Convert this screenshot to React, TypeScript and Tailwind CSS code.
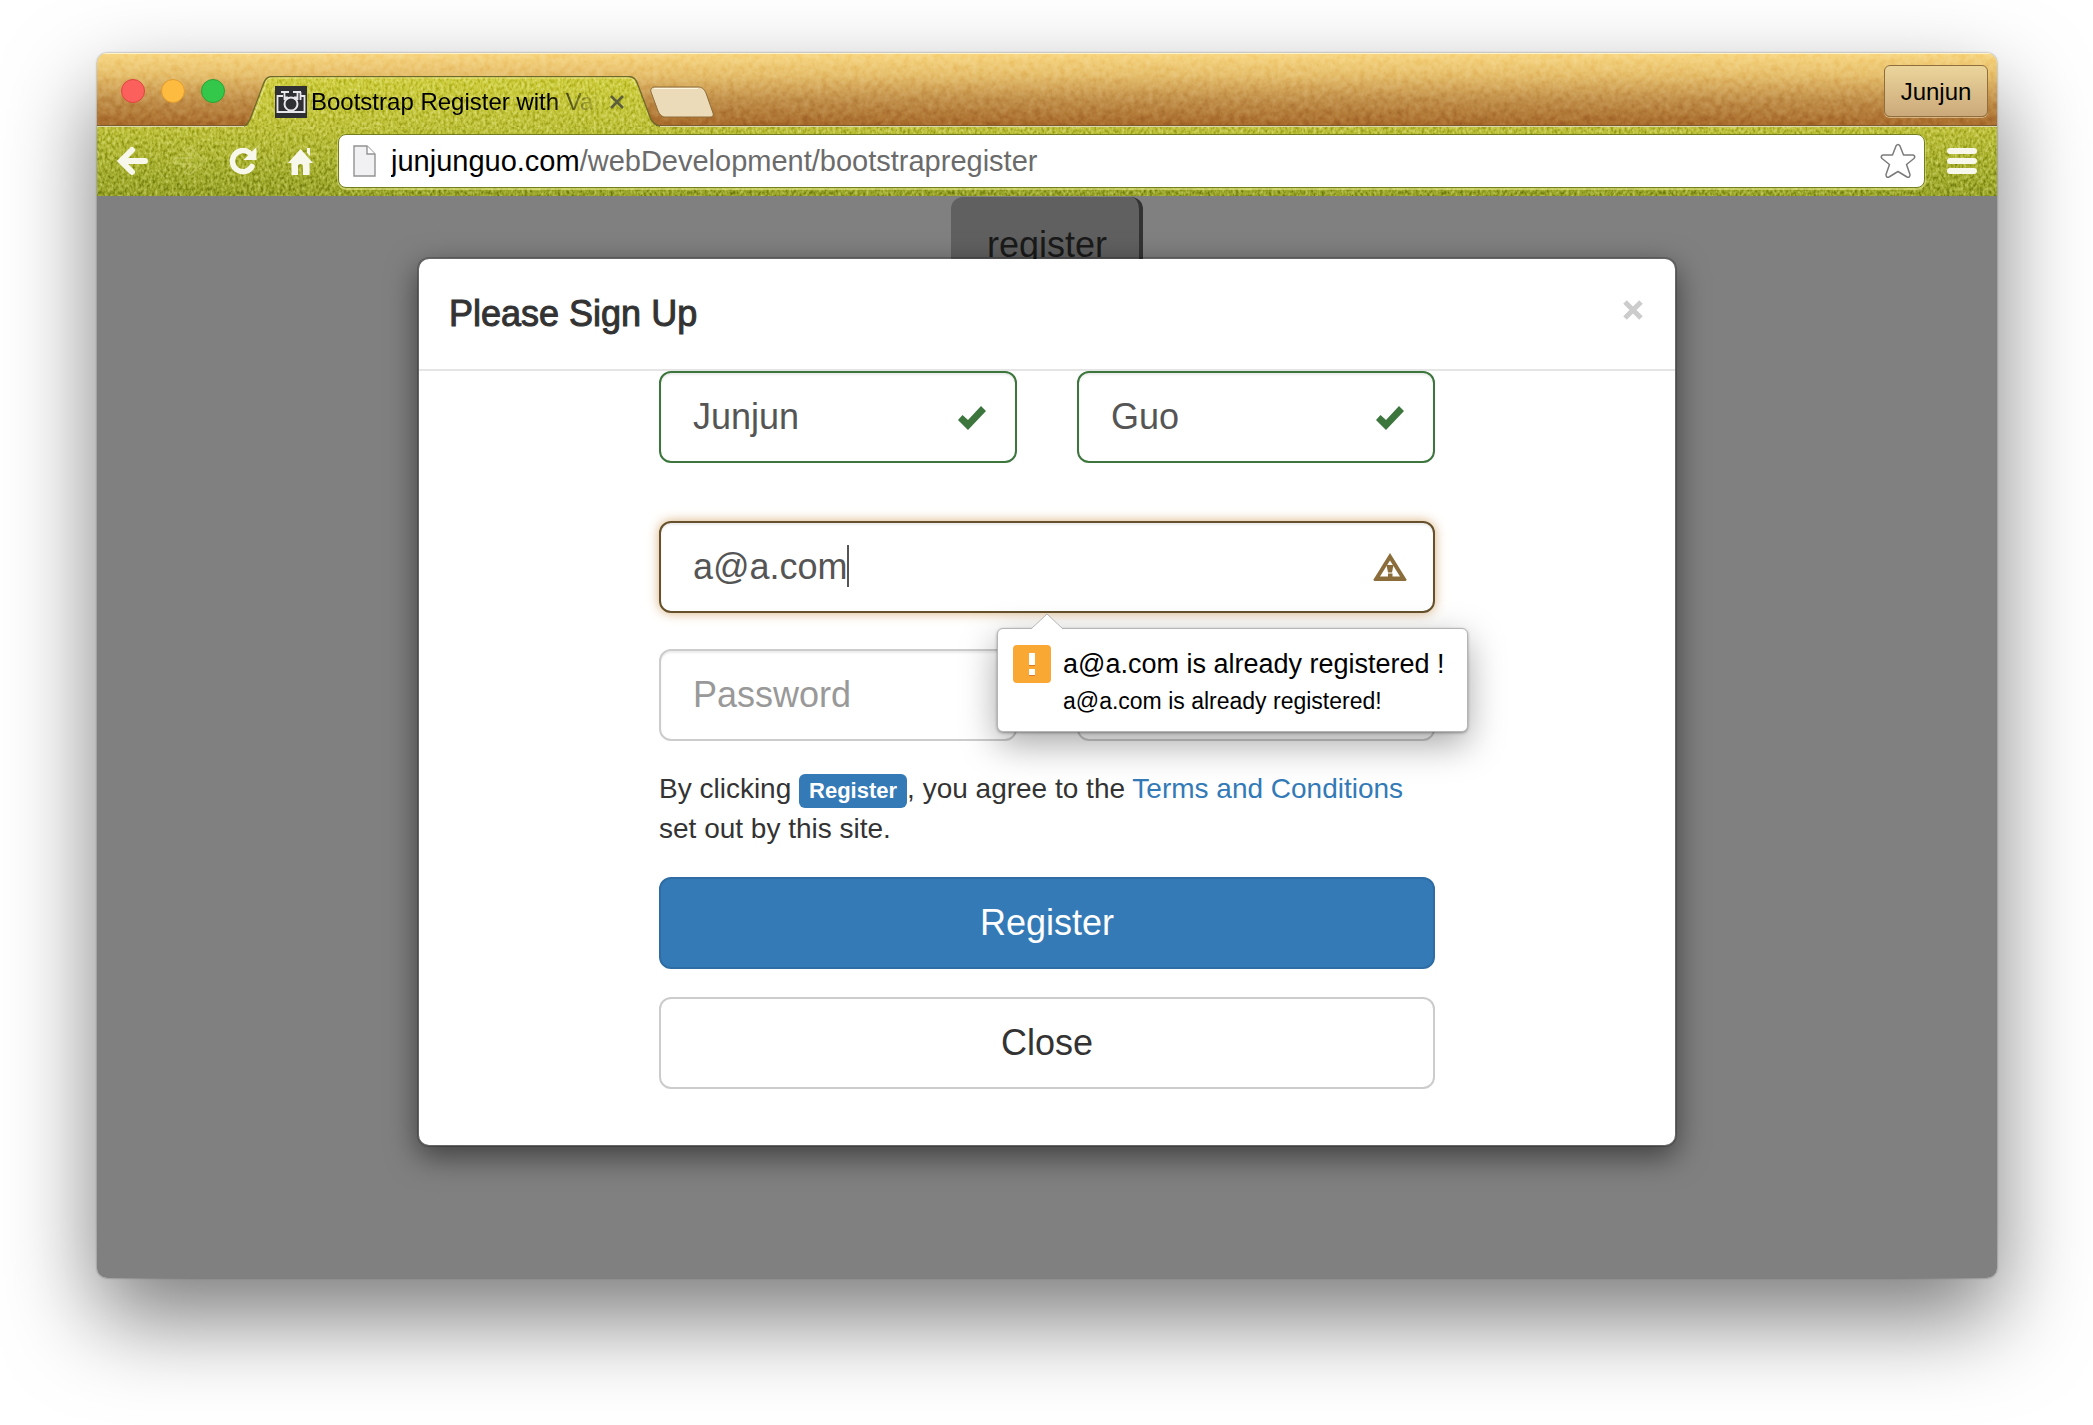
import { useState } from 'react';

// Noise used for the fabric look of the browser theme
function TextureDefs() {
  return (
    <svg width="0" height="0" className="absolute" aria-hidden="true">
      <defs>
        <filter id="denim" x="0" y="0" width="100%" height="100%" colorInterpolationFilters="sRGB">
          <feTurbulence type="fractalNoise" baseFrequency="0.36 0.26" numOctaves={2} seed={4} />
          <feColorMatrix values="1.3 0 0 0 -0.12  1.3 0 0 0 -0.12  1.3 0 0 0 -0.12  0 0 0 0 1" />
          <feBlend in2="SourceGraphic" mode="soft-light" />
          <feComposite in2="SourceGraphic" operator="in" />
        </filter>
        <filter id="suede" x="0" y="0" width="100%" height="100%" colorInterpolationFilters="sRGB">
          <feTurbulence type="fractalNoise" baseFrequency="0.16" numOctaves={3} seed={9} />
          <feColorMatrix values="0.4 0 0 0 0.3  0.4 0 0 0 0.3  0.4 0 0 0 0.3  0 0 0 0 1" />
          <feBlend in2="SourceGraphic" mode="soft-light" />
          <feComposite in2="SourceGraphic" operator="in" />
        </filter>
        <linearGradient id="gold" x1="0" y1="0" x2="0" y2="1">
          <stop offset="0" stopColor="#f8d782" />
          <stop offset="0.3" stopColor="#e6bf6c" />
          <stop offset="0.65" stopColor="#c18f49" />
          <stop offset="1" stopColor="#a76a2a" />
        </linearGradient>
        <linearGradient id="tabGreen" x1="0" y1="0" x2="0" y2="1">
          <stop offset="0" stopColor="#cccb3a" />
          <stop offset="1" stopColor="#bcbf36" />
        </linearGradient>
        <linearGradient id="barGreen" x1="0" y1="0" x2="0" y2="1">
          <stop offset="0" stopColor="#bcbf36" />
          <stop offset="1" stopColor="#94a024" />
        </linearGradient>
      </defs>
    </svg>
  );
}

function Favicon() {
  return (
    <svg viewBox="0 0 32 32" className="size-8 shrink-0" fill="none" stroke="#e8e8ec" aria-hidden="true">
      <rect width="32" height="32" fill="#2f3033" stroke="none" />
      <path d="M8 10H2.500v16h27V10H26" strokeWidth="1.800" />
      <path d="M6 6h8M18 6h8M9.500 6v8M22.500 6v8M25.500 6v8" strokeWidth="1.800" />
      <path d="M9 12h4M19 12h4" strokeWidth="3" />
      <circle cx="16" cy="18" r="6.500" strokeWidth="2" />
    </svg>
  );
}

function TitleBar() {
  return (
    <div className="relative z-10 flex h-[73px] items-end">
      <svg className="absolute inset-0 h-full w-full" aria-hidden="true">
        <rect width="100%" height="100%" fill="url(#gold)" filter="url(#suede)" />
        <rect y="0" width="100%" height="1" fill="#fff3c9" />
        <rect y="72" width="100%" height="1" fill="#7d5b2c" />
      </svg>
      <div className="relative flex h-full w-[147px] shrink-0 items-center gap-4 pl-6 pt-[3px]">
        <button aria-label="Close window" className="size-6 rounded-full border border-[#e0443f] bg-[#fc605c]" />
        <button aria-label="Minimise window" className="size-6 rounded-full border border-[#e0992f] bg-[#fdbc40]" />
        <button aria-label="Zoom window" className="size-6 rounded-full border border-[#27a237] bg-[#34c84a]" />
      </div>
      <div className="relative -mb-px h-[51px] w-[416px] shrink-0">
        <svg viewBox="0 0 416 51" className="absolute inset-0 h-full w-full" aria-hidden="true">
          <path
            d="M0 51C3 50 5 47 7 42L19 10C21 4 23 1 28 1H384C390 1 392 4 394 10L406 42C408 47 411 50 416 51Z"
            fill="url(#tabGreen)"
            filter="url(#denim)"
          />
          <path
            d="M0 50C3 49 5 46 7 41L19 9C21 3 23 0.500 28 0.500H384C390 0.500 392 3 394 9L406 41C408 46 411 49 416 50"
            fill="none"
            stroke="#6f6a2a"
            strokeWidth="1.300"
          />
          <path
            d="M9 42L21 10C22 4 24 2 28 2H384C389 2 390 4 392 10"
            fill="none"
            stroke="#f0efa0"
            strokeOpacity="0.700"
          />
        </svg>
        <div className="relative flex h-[51px] items-center gap-1 pl-[31px]">
          <Favicon />
          <span className="w-[286px] overflow-hidden whitespace-nowrap text-2xl text-black [mask-image:linear-gradient(to_right,black_238px,transparent_288px)]">
            Bootstrap Register with Validation
          </span>
          <button aria-label="Close tab" className="ml-1.5 grid size-5 place-items-center">
            <svg viewBox="0 0 14 14" className="size-3.5" stroke="#5c5d3a" strokeWidth="2.600">
              <path d="M1 1l12 12M13 1L1 13" />
            </svg>
          </button>
        </div>
      </div>
      <button aria-label="New tab" className="relative -ml-2.5 mb-2 h-8 w-16">
        <svg viewBox="0 0 64 32" className="h-8 w-16">
          <path
            d="M5 1H48C52 1 54 3 56 7L63 27C64 30 62 31 60 31H16C12 31 10 29 8 25L1 6C0 3 2 1 5 1Z"
            fill="#ecdbb8"
            stroke="#8c6b38"
          />
          <path d="M4 2.500H48" stroke="#fff8e0" />
        </svg>
      </button>
      <button className="relative mb-[9px] ml-auto mr-[9px] h-[52px] w-26 rounded-md border border-[#8f6d3c] bg-linear-to-b from-[#ebd59b] to-[#cba97a] pt-0.5 text-2xl text-black shadow-[0_1px_0_rgba(255,240,200,0.5)]">
        Junjun
      </button>
    </div>
  );
}

function Toolbar() {
  return (
    <div className="relative flex h-[70px] items-center pr-5">
      <svg className="absolute inset-0 h-full w-full" aria-hidden="true">
        <rect width="100%" height="100%" fill="url(#barGreen)" filter="url(#denim)" />
        {/* the hairline stops where the active tab joins the bar */}
        <rect width="147" height="1" fill="#dcd8b0" />
        <rect x="563" width="100%" height="1" fill="#dcd8b0" />
      </svg>
      <nav className="relative flex w-[241px] shrink-0 items-center pl-[19px]">
        <button aria-label="Back">
          <svg viewBox="0 0 34 30" className="h-[30px] w-[34px]" fill="none" stroke="#f7f7ec" strokeWidth="6">
            <path d="M16 4L5 15l11 11M6 15h23" strokeLinecap="round" strokeLinejoin="miter" />
          </svg>
        </button>
        <button aria-label="Forward" disabled className="ml-[22px]">
          <svg
            viewBox="0 0 34 30"
            className="h-[30px] w-[34px]"
            fill="#c8cc50"
            fillOpacity="0.200"
            stroke="#d4d676"
            strokeOpacity="0.550"
            strokeWidth="1.500"
          >
            <path d="M3 12h17l-6-6q-1-3 2-4 2-1 4 1l12 12-12 12q-2 2-4 1-3-1-2-4l6-6H3q-2-1-2-3t2-3z" />
          </svg>
        </button>
        <button aria-label="Reload" className="ml-[22px]">
          <svg viewBox="0 0 30 30" className="size-[30px]">
            <path d="M24 20.500A10.500 10.500 0 1 1 21 6.500" fill="none" stroke="#f7f7ec" strokeWidth="5.500" strokeLinecap="round" />
            <path d="M28.500 1v13H15.500z" fill="#f7f7ec" />
          </svg>
        </button>
        <button aria-label="Home" className="ml-[30px]">
          <svg viewBox="0 0 26 30" className="h-[30px] w-[26px]" fill="#f7f7ec">
            <path d="M12.500 3L0 17h3.500v12h6.500v-9q0-2 2.500-2t2.500 2v9h6.500V17h3.500zM19 2h3v8l-3-3z" />
          </svg>
        </button>
      </nav>
      <div className="relative flex h-[54px] min-w-0 flex-1 items-center rounded-lg border border-[#71801c] bg-white pl-3.5 pr-2 shadow-[0_1px_0_1px_rgba(230,232,140,0.6)]">
        <svg viewBox="0 0 24 32" className="mr-3.5 h-8 w-6 shrink-0" aria-hidden="true">
          <path d="M1 1h13l8 8v22H1z" fill="#f1f1f3" stroke="#929292" strokeWidth="1.400" />
          <path d="M14 1v8h8" fill="#fff" stroke="#929292" strokeWidth="1.400" />
        </svg>
        <div className="min-w-0 flex-1 truncate text-[29px] leading-10 text-[#6b6b6b]">
          <span className="text-black">junjunguo.com</span>/webDevelopment/bootstrapregister
        </div>
        <button aria-label="Bookmark this page">
          <svg viewBox="0 0 36 36" className="size-9" fill="#fff" stroke="#7b7b7b" strokeWidth="1.500" strokeLinejoin="round">
            <path d="M16 3Q18 0 20 3L23.500 12H33Q36 13 34 15.500L26.500 21.500L30 31.500Q30 35 27 34L18 28.500L9 34Q6 35 6 31.500L9.500 21.500L2 15.500Q0 13 3 12H12.500Z" />
          </svg>
        </button>
      </div>
      <button aria-label="Menu" className="relative ml-[22px] flex w-[30px] flex-col gap-1">
        <span className="h-1.5 rounded-full bg-[#f7f7ec]" />
        <span className="h-1.5 rounded-full bg-[#f7f7ec]" />
        <span className="h-1.5 rounded-full bg-[#f7f7ec]" />
      </button>
    </div>
  );
}

function CheckIcon() {
  return (
    <svg viewBox="0 0 28 24" className="absolute right-[31px] top-[35px] h-6 w-7" fill="#3c763d" aria-hidden="true">
      <path d="M0 14l4.500-5 5.500 5L23 0l5 5L10 24z" />
    </svg>
  );
}

function WarningIcon() {
  return (
    <svg viewBox="0 0 34 28" className="absolute right-7 top-8 h-7 w-[34px]" aria-hidden="true">
      <path d="M17 0L33.500 26.500Q33.500 28 32 28H2Q0.500 28 0.500 26.500Z" fill="#8a6d3b" />
      <path d="M17 7.500L27 23.500H7Z" fill="#fff" />
      <path d="M13.500 12h7l-1.500 7.500h-4zM15 20.500h4.500v3.500H15z" fill="#8a6d3b" />
    </svg>
  );
}

const inputBase =
  'h-[92px] w-full rounded-xl border-2 bg-white px-8 text-4xl text-[#555] outline-none placeholder:text-[#999] placeholder:opacity-100 shadow-[inset_0_2px_2px_rgba(0,0,0,0.075)]';

function EmailTooltip() {
  return (
    <div
      role="alert"
      className="absolute left-[338px] top-[107px] z-10 flex w-max gap-3 rounded-md border border-[#b5b5b5] bg-white pb-3 pl-[15px] pr-[22px] pt-4 text-black shadow-[0_12px_36px_rgba(0,0,0,0.35),0_1px_3px_rgba(0,0,0,0.35)]"
    >
      <svg viewBox="0 0 32 17" className="absolute -top-4 left-[33px] h-[17px] w-8" aria-hidden="true">
        <path d="M0 16L16 1l16 15v1H0z" fill="#fff" />
        <path d="M0 16L16 1l16 15" fill="none" stroke="#b5b5b5" />
      </svg>
      <svg viewBox="0 0 38 38" className="size-[38px] shrink-0" aria-hidden="true">
        <rect width="38" height="38" rx="4" fill="#f9a833" />
        <path d="M16 8h6v12h-6zM16 24h6v6h-6z" fill="#fff" />
        <path d="M16 20h6v1h-6zM16 30h6v1h-6z" fill="#d9782a" />
      </svg>
      <div>
        <p className="text-[27px] leading-[38px]">a@a.com is already registered !</p>
        <p className="text-[23px] leading-9">a@a.com is already registered!</p>
      </div>
    </div>
  );
}

function SignUpModal() {
  const [email, setEmail] = useState('a@a.com');

  return (
    <div
      role="dialog"
      aria-labelledby="signup-title"
      className="w-full max-w-[1260px] rounded-xl border-2 border-black/20 bg-white bg-clip-padding text-[#333] shadow-[0_10px_30px_rgba(0,0,0,0.5)]"
    >
      <header className="flex h-28 items-center justify-between border-b-2 border-[#e5e5e5] px-[30px]">
        <h4 id="signup-title" className="text-4xl font-normal [-webkit-text-stroke:1px_#333]">
          Please Sign Up
        </h4>
        <button aria-label="Close" className="mb-2 grid size-6 place-items-center">
          <svg viewBox="0 0 20 20" className="size-5" stroke="#ccc" strokeWidth="5">
            <path d="M2 2l16 16M18 2L2 18" />
          </svg>
        </button>
      </header>

      <form className="mx-auto w-full max-w-[776px] pb-14" onSubmit={(e) => e.preventDefault()}>
        <div className="grid grid-cols-2 gap-[60px]">
          <div className="relative">
            <input aria-label="First name" className={`${inputBase} border-[#3c763d]`} defaultValue="Junjun" />
            <CheckIcon />
          </div>
          <div className="relative">
            <input aria-label="Last name" className={`${inputBase} border-[#3c763d]`} defaultValue="Guo" />
            <CheckIcon />
          </div>
        </div>

        <div className="relative mt-[58px]">
          <input
            type="text"
            aria-label="Email"
            className="block h-[92px] w-full rounded-xl border-2 border-[#66512c] bg-white px-8 text-4xl text-[#555] caret-transparent shadow-[inset_0_2px_2px_rgba(0,0,0,0.075),0_0_12px_#d9b07c] outline-none"
            value={email}
            onChange={(e) => setEmail(e.target.value)}
          />
          {/* text cursor */}
          <span className="pointer-events-none absolute left-[188px] top-6 h-[42px] w-0.5 bg-[#555]" />
          <WarningIcon />
          <EmailTooltip />
        </div>

        <div className="mt-9 grid grid-cols-2 gap-[60px]">
          <input type="password" aria-label="Password" placeholder="Password" className={`${inputBase} border-[#ccc]`} />
          <input type="password" aria-label="Confirm password" className={`${inputBase} border-[#ccc]`} />
        </div>

        <p className="mt-7 text-[28px] leading-10">
          By clicking{' '}
          <strong className="inline-block rounded-md bg-[#337ab7] px-2.5 text-[22px] font-bold leading-[34px] text-white">
            Register
          </strong>
          , you agree to the{' '}
          <a href="#terms" className="text-[#337ab7]">
            Terms and Conditions
          </a>{' '}
          set out by this site.
        </p>

        <button
          type="submit"
          className="mt-7 block h-[92px] w-full rounded-xl border-2 border-[#2e6da4] bg-[#337ab7] text-4xl text-white"
        >
          Register
        </button>
        <button type="button" className="mt-7 block h-[92px] w-full rounded-xl border-2 border-[#ccc] bg-white text-4xl text-[#333]">
          Close
        </button>
      </form>
    </div>
  );
}

export default function App() {
  return (
    <div className="flex min-h-screen flex-col bg-white pb-[147px] pl-[97px] pr-24 pt-[53px] font-['Liberation_Sans',Arial,sans-serif]">
      <TextureDefs />
      <div className="flex flex-1 flex-col overflow-hidden rounded-[10px] shadow-[0_0_2px_rgba(0,0,0,0.5),0_40px_90px_rgba(0,0,0,0.52)]">
        <TitleBar />
        <Toolbar />
        <main className="relative flex-1 bg-[#808080]">
          <button className="mx-auto mt-px block h-24 w-48 rounded-xl border-r-4 border-[#333] bg-[#606060] pl-1 text-4xl text-[#1a1a1a]">
            register
          </button>
          <div className="absolute inset-0 flex items-start justify-center pt-[61px]">
            <SignUpModal />
          </div>
        </main>
      </div>
    </div>
  );
}
